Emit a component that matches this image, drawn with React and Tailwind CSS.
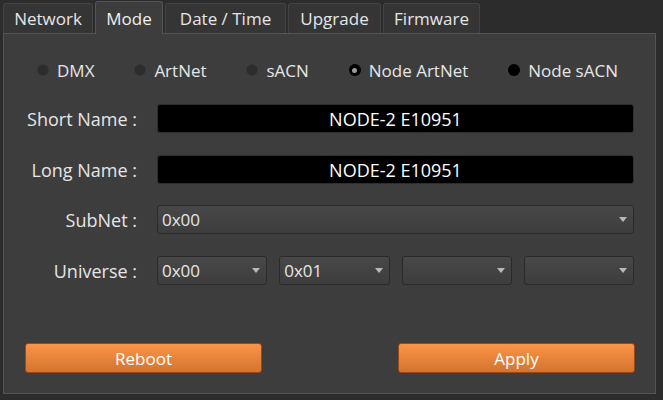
import { useState } from 'react';

const tabs = [
  { name: 'Network', w: 'w-[90px]' },
  { name: 'Mode', w: 'w-[68px]' },
  { name: 'Date / Time', w: 'w-[121px]' },
  { name: 'Upgrade', w: 'w-[93px]' },
  { name: 'Firmware', w: 'w-[97px]' },
];

const modes = ['DMX', 'ArtNet', 'sACN', 'Node ArtNet', 'Node sACN'];

function Radio({ label, state }) {
  return (
    <div className="flex items-center gap-2">
      {state === 'checked' ? (
        <span className="w-3 h-3 rounded-full bg-black flex items-center justify-center">
          <span className="w-[5px] h-[5px] rounded-full bg-[#9a9a9a]" />
        </span>
      ) : state === 'dark' ? (
        <span className="w-3 h-3 rounded-full bg-black" />
      ) : (
        <span className="w-3 h-3 rounded-full bg-[#2c2c2c] border border-[#353535]" />
      )}
      <span>{label}</span>
    </div>
  );
}

function Arrow() {
  return (
    <svg width="8" height="5" viewBox="0 0 8 5" className="shrink-0">
      <path d="M0 0 H8 L4 5 Z" fill="#b8b8b8" />
    </svg>
  );
}

function Select({ value, className }) {
  return (
    <div
      className={`h-[29px] flex items-center justify-between pl-[4px] pr-[6px] rounded-[3px] border border-[#2a2a2a] bg-gradient-to-b from-[#484848] to-[#3d3d3d] ${className}`}
    >
      <span>{value}</span>
      <Arrow />
    </div>
  );
}

function Row({ label, children, className = '' }) {
  return (
    <div className={`flex items-center ${className}`}>
      <div className="w-[133px] text-right text-[18px] whitespace-nowrap">{label}</div>
      <div className="ml-[20px] w-[477px] flex gap-3">{children}</div>
    </div>
  );
}

export default function App() {
  const [active] = useState('Mode');

  return (
    <div
      className="w-[663px] h-[400px] bg-[#2c2c2c] text-[#e6e6e6] text-[17px] leading-none overflow-hidden"
      style={{ fontFamily: '"Open Sans", "Noto Sans", sans-serif' }}
    >
      {/* tabs */}
      <div className="flex items-end gap-[2px] pl-[3px] pt-[3px] h-[33px]">
        {tabs.map((t) =>
          t.name === active ? (
            <div
              key={t.name}
              className={`${t.w} h-[33px] -mb-px relative z-10 flex items-center justify-center rounded-t-[3px] border border-b-0 border-[#555] bg-[#3d3d3d] text-[#f0f0f0]`}
            >
              {t.name}
            </div>
          ) : (
            <div
              key={t.name}
              className={`${t.w} h-[30px] flex items-center justify-center rounded-t-[3px] border border-b-0 border-[#444] bg-[#353535]`}
            >
              {t.name}
            </div>
          )
        )}
      </div>

      {/* panel */}
      <div className="ml-[3px] w-[653px] h-[361px] border border-[#545454] bg-[#3d3d3d]">
        <div className="flex justify-between pl-[33px] pr-[37px] mt-[26px] h-[20px]">
          {modes.map((m, i) => (
            <Radio key={m} label={m} state={i === 3 ? 'checked' : i === 4 ? 'dark' : 'off'} />
          ))}
        </div>

        <Row label="Short Name :" className="mt-[24px]">
          <div className="w-full h-[29px] rounded-[3px] bg-black border border-[#2e2e2e] flex items-center justify-center text-white text-[18px]">
            NODE-2 E10951
          </div>
        </Row>
        <Row label="Long Name :" className="mt-[22px]">
          <div className="w-full h-[29px] rounded-[3px] bg-black border border-[#2e2e2e] flex items-center justify-center text-white text-[18px]">
            NODE-2 E10951
          </div>
        </Row>
        <Row label="SubNet :" className="mt-[21px]">
          <Select value="0x00" className="w-full" />
        </Row>
        <Row label="Universe :" className="mt-[22px]">
          <Select value="0x00" className="w-[111px]" />
          <Select value="0x01" className="w-[111px]" />
          <Select value="" className="w-[111px]" />
          <Select value="" className="w-[111px]" />
        </Row>

        <div className="flex justify-between pl-[21px] pr-[20px] mt-[58px]">
          <button className="w-[237px] h-[30px] rounded-[3px] border border-[#9a4a18] bg-gradient-to-b from-[#fb9447] to-[#d4742f] text-white">
            Reboot
          </button>
          <button className="w-[237px] h-[30px] rounded-[3px] border border-[#9a4a18] bg-gradient-to-b from-[#fb9447] to-[#d4742f] text-white">
            Apply
          </button>
        </div>
      </div>
    </div>
  );
}
